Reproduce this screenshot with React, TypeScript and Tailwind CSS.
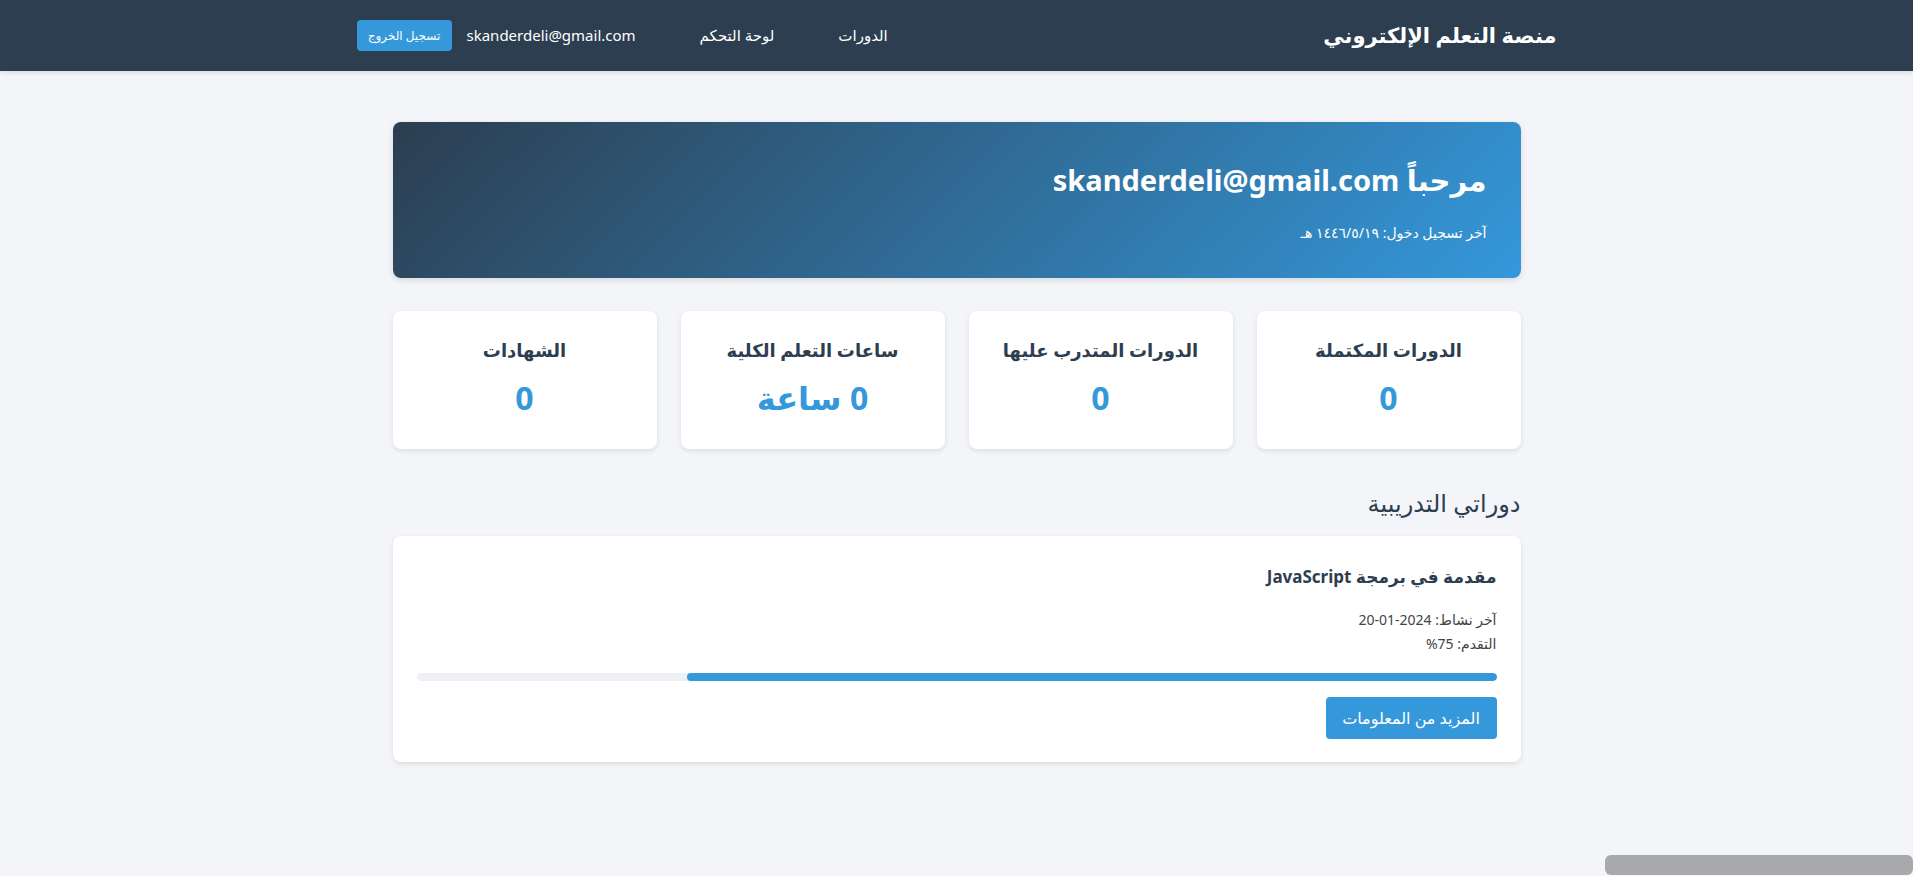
const stats = [
  { label: 'الدورات المكتملة', value: '0' },
  { label: 'الدورات المتدرب عليها', value: '0' },
  { label: 'ساعات التعلم الكلية', value: '0 ساعة' },
  { label: 'الشهادات', value: '0' },
];

const courses = [
  { title: 'مقدمة في برمجة JavaScript', lastActivity: '2024-01-20', progress: 75 },
];

export default function App() {
  return (
    <div
      dir="rtl"
      className="min-h-[876px] bg-[#f4f5f9] text-[#2c3e50]"
      style={{ fontFamily: '"Segoe UI", "Noto Sans", "DejaVu Sans", sans-serif' }}
    >
      {/* Navbar */}
      <nav className="h-[71px] bg-[#2c3e50] shadow-[0_2px_4px_rgba(0,0,0,0.1)]">
        <div className="mx-auto flex h-full w-[1200px] items-center justify-between">
          <h1 className="text-[21px] font-semibold text-white">منصة التعلم الإلكتروني</h1>
          <div className="flex items-center text-[15px] text-white">
            <a className="ml-[64px]">الدورات</a>
            <a className="ml-[64px]">لوحة التحكم</a>
            <span dir="ltr" className="ml-[15px]">skanderdeli@gmail.com</span>
            <button className="h-[31px] w-[95px] rounded-[4px] bg-[#3498db] text-[12px] text-white">
              تسجيل الخروج
            </button>
          </div>
        </div>
      </nav>

      <main className="mx-auto w-[1128px] pt-[51px]">
        {/* Welcome */}
        <section className="h-[156px] rounded-[8px] bg-[linear-gradient(135deg,#2c3e50,#3498db)] px-[34px] pt-[40px] text-white shadow-[0_2px_6px_rgba(0,0,0,0.12)]">
          <h2 className="text-[29px] font-bold leading-[36px]">مرحباً skanderdeli@gmail.com</h2>
          <p className="mt-[24px] text-[14px]">آخر تسجيل دخول: ١٤٤٦/٥/١٩ هـ</p>
        </section>

        {/* Stats */}
        <section className="mt-[33px] grid grid-cols-4 gap-6">
          {stats.map((s) => (
            <div
              key={s.label}
              className="flex h-[138px] flex-col items-center rounded-[8px] bg-white pt-[27px] shadow-[0_2px_5px_rgba(0,0,0,0.1)]"
            >
              <h3 className="text-[18px] font-semibold leading-[24px] text-[#2c3e50]">{s.label}</h3>
              <div className="mt-[16px] text-[32px] font-bold leading-[40px] text-[#3498db]">{s.value}</div>
            </div>
          ))}
        </section>

        {/* Courses */}
        <h2 className="mt-[38px] text-[24px] leading-[32px] text-[#2c3e50]">دوراتي التدريبية</h2>
        <section className="mt-[17px] space-y-4">
          {courses.map((c) => (
            <div key={c.title} className="rounded-[8px] bg-white px-[24px] pb-[23px] pt-[29px] shadow-[0_2px_5px_rgba(0,0,0,0.1)]">
              <h3 className="text-[17px] font-bold leading-[24px] text-[#2c3e50]">{c.title}</h3>
              <p className="mt-[19px] text-[14px] leading-[24px] text-[#444]">آخر نشاط: {c.lastActivity}</p>
              <p className="text-[14px] leading-[24px] text-[#444]">التقدم: {c.progress}%</p>
              <div className="mt-[17px] h-[8px] w-full overflow-hidden rounded-full bg-[#eef0f3]">
                <div className="h-full rounded-full bg-[#3498db]" style={{ width: `${c.progress}%` }} />
              </div>
              <button className="mt-[16px] h-[42px] w-[171px] rounded-[4px] bg-[#3498db] text-[16px] text-white">
                المزيد من المعلومات
              </button>
            </div>
          ))}
        </section>
      </main>

      <div className="fixed bottom-[1px] right-0 h-[20px] w-[308px] rounded-[6px] bg-[#a8a9ac]" />
    </div>
  );
}
